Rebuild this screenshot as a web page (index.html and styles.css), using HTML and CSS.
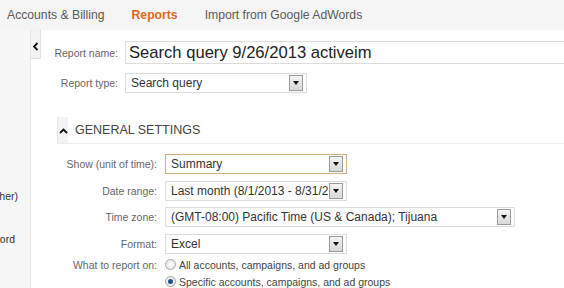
FILE: index.html
```html
<!DOCTYPE html>
<html lang="en">
<head>
    <meta charset="UTF-8">
    <title>Reports</title>
    <link rel="stylesheet" href="styles.css">
</head>
<body>
    <div class="topnav">
        <a class="nav-item">Accounts &amp; Billing</a>
        <a class="nav-item active">Reports</a>
        <a class="nav-item">Import from Google AdWords</a>
    </div>

    <div class="page">
        <div class="sidebar">
            <div class="side-item first">(other)</div>
            <div class="side-item second">keyword</div>
        </div>

        <div class="main">
            <div class="collapse-tab">
                <svg width="7" height="9" viewBox="0 0 7 9"><path d="M5.5 1 L2 4.5 L5.5 8" fill="none" stroke="#111" stroke-width="1.8"/></svg>
            </div>

            <div class="report-form">
                <label class="lbl">Report name:</label>
                <input class="name-input" type="text" value="Search query 9/26/2013 activeim">

                <label class="lbl">Report type:</label>
                <div class="select w182"><span>Search query</span><i class="arrow"></i></div>
            </div>

            <div class="section">
                <div class="section-head">
                    <span class="toggle">
                        <svg width="9" height="6" viewBox="0 0 9 6"><path d="M1 5 L4.5 1.5 L8 5" fill="none" stroke="#111" stroke-width="1.8"/></svg>
                    </span>
                    <span class="section-title">GENERAL SETTINGS</span>
                </div>

                <div class="settings">
                    <label class="lbl">Show (unit of time):</label>
                    <div class="select w182 focused"><span>Summary</span><i class="arrow"></i></div>

                    <label class="lbl">Date range:</label>
                    <div class="select w182"><span>Last month (8/1/2013 - 8/31/2013)</span><i class="arrow"></i></div>

                    <label class="lbl">Time zone:</label>
                    <div class="select w350"><span>(GMT-08:00) Pacific Time (US &amp; Canada); Tijuana</span><i class="arrow"></i></div>

                    <label class="lbl">Format:</label>
                    <div class="select w182"><span>Excel</span><i class="arrow"></i></div>

                    <label class="lbl radio-lbl">What to report on:</label>
                    <div class="radios">
                        <div class="radio-row"><span class="radio"></span>All accounts, campaigns, and ad groups</div>
                        <div class="radio-row"><span class="radio checked"></span>Specific accounts, campaigns, and ad groups</div>
                    </div>
                </div>
            </div>
        </div>
    </div>
</body>
</html>
```

FILE: styles.css
```css
body {
    margin: 0;
    font-family: "Liberation Sans", Arial, sans-serif;
    background: #fff;
    color: #333;
    overflow: hidden;
}
.topnav {
    height: 30px;
    background: #f5f5f5;
    display: flex;
    align-items: center;
    padding-left: 7px;
    gap: 27px;
}
.nav-item {
    font-size: 12.2px;
    color: #5a5a5a;
}
.nav-item.active {
    color: #dc6a1e;
    font-weight: bold;
}
.page {
    display: flex;
    height: 258px;
}
.sidebar {
    width: 30px;
    background: #f7f7f7;
    border-right: 1px solid #e6e6e6;
    overflow: hidden;
    flex-shrink: 0;
}
.side-item {
    display: flex;
    justify-content: flex-end;
    white-space: nowrap;
    font-size: 10.5px;
    color: #333;
    padding-right: 12px;
    height: 14px;
}
.side-item.first {
    margin-top: 160px;
    margin-bottom: 29px;
}
.side-item.second {
    padding-right: 15px;
}
.main {
    position: relative;
    flex: 1;
    padding-top: 11px;
}
.collapse-tab {
    position: absolute;
    left: -1px;
    top: 0;
    width: 11px;
    height: 29px;
    background: #f3f3f3;
    border: 1px solid #e3e3e3;
    border-top: none;
    display: flex;
    justify-content: center;
    padding-top: 12px;
    box-sizing: border-box;
}
.report-form {
    display: grid;
    grid-template-columns: 87px 1fr;
    column-gap: 7px;
    row-gap: 9px;
    align-items: center;
}
.lbl {
    font-size: 10.5px;
    color: #666;
    text-align: right;
}
.name-input {
    height: 23px;
    box-sizing: border-box;
    border: 1px solid #dcdcdc;
    border-right: none;
    font-family: "Liberation Sans", Arial, sans-serif;
    font-size: 16.6px;
    color: #222;
    padding: 0 3px;
    margin: 0;
    outline: none;
}
.select {
    height: 20px;
    box-sizing: border-box;
    border: 1px solid #dcdcdc;
    display: flex;
    align-items: center;
    font-size: 12px;
    color: #333;
    padding-left: 5px;
    background: #fff;
}
.select span {
    flex: 1;
    white-space: nowrap;
    overflow: hidden;
}
.select.focused {
    border-color: #d4ae84;
}
.w182 {
    width: 182px;
}
.w350 {
    width: 350px;
}
.arrow {
    width: 12px;
    height: 14px;
    margin: 0 3px 0 1px;
    border: 1px solid #9a9a9a;
    background: linear-gradient(#f4f4f4, #d8d8d8);
    position: relative;
    flex-shrink: 0;
}
.arrow::after {
    content: "";
    position: absolute;
    left: 3px;
    top: 5px;
    border-left: 3px solid transparent;
    border-right: 3px solid transparent;
    border-top: 4px solid #111;
}
.section {
    margin: 24px 0 0 26px;
}
.section-head {
    display: flex;
    align-items: center;
    height: 26px;
    border-bottom: 1px solid #ececec;
}
.toggle {
    width: 11px;
    height: 26px;
    background: #f3f3f3;
    border-left: 1px solid #e6e6e6;
    display: flex;
    justify-content: center;
    align-items: center;
    padding-top: 2px;
    box-sizing: border-box;
}
.section-title {
    font-size: 12.5px;
    color: #444;
    margin-left: 7px;
}
.settings {
    display: grid;
    grid-template-columns: 100px 1fr;
    column-gap: 8px;
    row-gap: 6.5px;
    align-items: center;
    margin-top: 10px;
}
.radios {
    font-size: 10.5px;
    color: #444;
    margin-top: -4px;
}
.radio-lbl {
    align-self: start;
    margin-top: -1px;
}
.radio-row {
    display: flex;
    align-items: center;
    height: 17px;
}
.radio {
    width: 9px;
    height: 9px;
    border-radius: 50%;
    border: 1px solid #a8a8a8;
    background: radial-gradient(#fff, #ddd);
    margin-right: 3px;
    position: relative;
}
.radio.checked::after {
    content: "";
    position: absolute;
    left: 2px;
    top: 2px;
    width: 5px;
    height: 5px;
    border-radius: 50%;
    background: #1f4f8a;
}
```
